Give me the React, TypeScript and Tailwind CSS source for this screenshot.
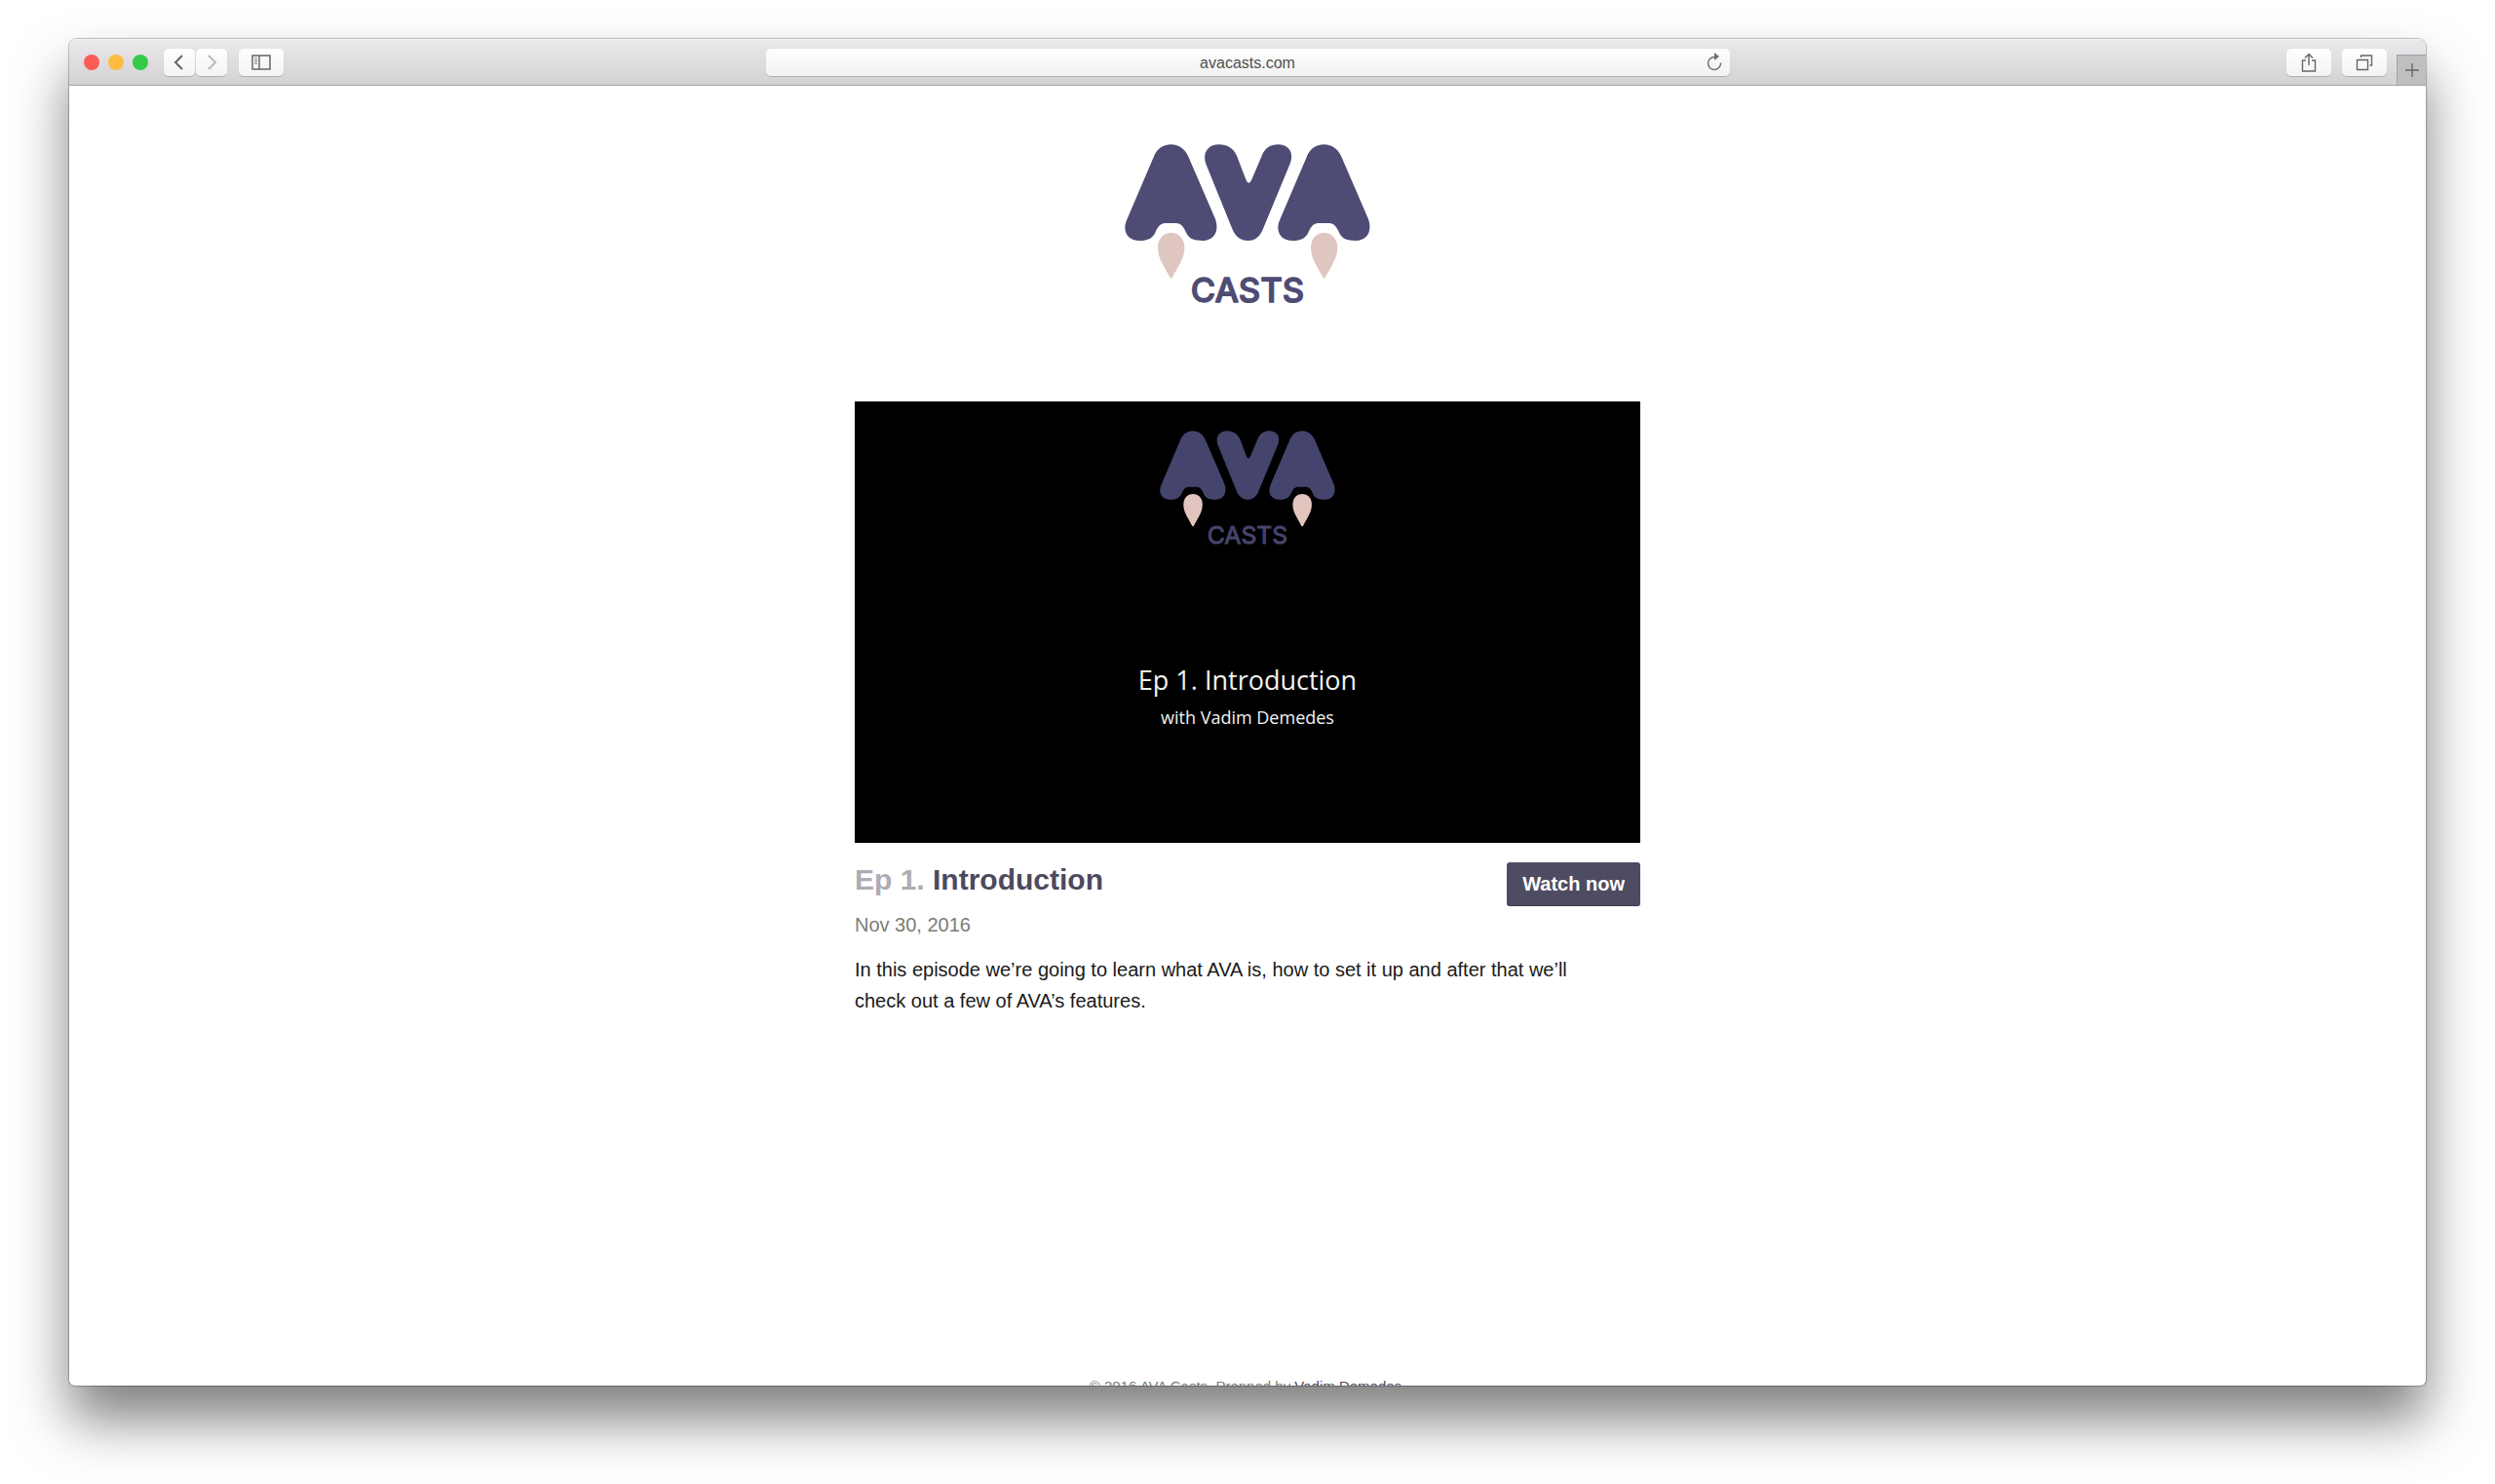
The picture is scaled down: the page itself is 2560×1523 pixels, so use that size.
import React from "react";

function Fang({ fill }: { fill: string }) {
  return (
    <path
      fill={fill}
      d="M215 327C240 327 256 346 256 372C256 405 240 422 221 460Q215 474 209 460C190 422 174 405 174 372C174 346 190 327 215 327Z"
    />
  );
}

function Peak() {
  return (
    <path d="M215 55C240 55 258 70 268 92L350 282C364 318 350 351 312 351C285 351 270 345 262 328C254 308 245 297 230 297L196 297C183 297 174 308 166 326C158 342 145 351 118 351C80 351 64 322 78 288L160 96C170 70 188 55 215 55Z" />
  );
}

function Logo({ className, body, fang, weight }: { className: string; body: string; fang: string; weight: number }) {
  return (
    <svg className={className} viewBox="72 54 756 520" role="img" aria-label="AVA Casts">
      <g fill={body}>
        <Peak />
        <path d="M362 55C390 55 408 68 418 92L446 165Q454 182 462 165L493 92C503 66 520 55 545 55C577 55 594 80 581 114L499 312C489 338 474 351 452 351C428 351 412 338 402 312L322 115C311 85 325 55 362 55Z" />
        <g transform="translate(471 0)">
          <Peak />
        </g>
      </g>
      <Fang fill={fang} />
      <g transform="translate(471 0)">
        <Fang fill={fang} />
      </g>
      <text
        x="450"
        y="541"
        textAnchor="middle"
        fontFamily="Inter, sans-serif"
        fontWeight={weight}
        fontSize="104"
        fill={body}
        stroke={body}
        strokeWidth="4"
        strokeLinejoin="round"
      >
        CASTS
      </text>
    </svg>
  );
}

const toolButton =
  "flex h-7 items-center justify-center rounded-[5px] bg-linear-to-b from-[#fefefe] to-[#f4f4f4] shadow-[0_1px_1px_rgba(0,0,0,0.18)]";

function Toolbar() {
  return (
    <header className="grid h-12 shrink-0 grid-cols-[1fr_989px_1fr] items-center border-b border-[#a5a2a7] bg-linear-to-b from-[#ebe9eb] to-[#d3d1d4] shadow-[inset_0_1px_0_#f6f5f6]">
      <div className="flex items-center pl-[15px]">
        <div className="flex gap-[9px]">
          <span className="size-4 rounded-full bg-[#fc5b57]" />
          <span className="size-4 rounded-full bg-[#fdbc40]" />
          <span className="size-4 rounded-full bg-[#33cb47]" />
        </div>
        <div className="ml-4 flex gap-px">
          <button aria-label="Back" className={`${toolButton} w-8`}>
            <svg className="size-5" viewBox="0 0 20 20" fill="none" stroke="#666" strokeWidth="2">
              <path d="M13 3 6 10l7 7" />
            </svg>
          </button>
          <button aria-label="Forward" className={`${toolButton} w-8`}>
            <svg className="size-5" viewBox="0 0 20 20" fill="none" stroke="#bbb" strokeWidth="2">
              <path d="m7 3 7 7-7 7" />
            </svg>
          </button>
        </div>
        <button aria-label="Show sidebar" className={`${toolButton} ml-3 w-[46px]`}>
          <svg className="h-4 w-5" viewBox="0 0 20 16" fill="none" stroke="#666">
            <rect x="1" y="1" width="18" height="14" strokeWidth="1.5" />
            <path d="M8 1v14" strokeWidth="1.5" />
            <path d="M3 4h3M3 6.500h3M3 9h3" />
          </svg>
        </button>
      </div>
      <div className="relative">
        <input
          aria-label="Address"
          defaultValue="avacasts.com"
          className="block h-7 w-full rounded-[5px] bg-linear-to-b from-[#fefefe] to-[#f2f2f2] pt-0.5 text-center text-base text-[#505050] shadow-[0_1px_1px_rgba(0,0,0,0.18)]"
        />
        <button aria-label="Reload" className="absolute top-1 right-1.5">
          <svg className="size-5" viewBox="0 0 20 20" fill="none" stroke="#707070" strokeWidth="1.500">
            <path d="M16.500 10.500A6.500 6.500 0 1 1 10 4.500h2" />
            <path d="m10 0 5 4-5 4z" fill="#707070" stroke="none" />
          </svg>
        </button>
      </div>
      <div className="flex h-full items-center justify-end">
        <button aria-label="Share" className={`${toolButton} w-[46px]`}>
          <svg className="size-5" viewBox="0 0 20 20" fill="none" stroke="#666" strokeWidth="1.400">
            <path d="M7 8H3.500v11h13V8H13M10 13V2M6 5.500l4-4 4 4" />
          </svg>
        </button>
        <button aria-label="Show all tabs" className={`${toolButton} ml-[11px] w-[46px]`}>
          <svg className="size-5" viewBox="0 0 20 20" fill="none" stroke="#666" strokeWidth="1.400">
            <path d="M2.500 7.500h11v10h-11zM6.500 5V3h11v10H15.500" />
          </svg>
        </button>
        <button
          aria-label="New tab"
          className="ml-[10px] flex h-[31px] w-[30px] items-center justify-center self-end border-t border-l border-[#a5a2a7] bg-[#c0bec1]"
        >
          <svg className="size-4" viewBox="0 0 16 16" stroke="#666" strokeWidth="1.400">
            <path d="M8 1v14M1 8h14" />
          </svg>
        </button>
      </div>
    </header>
  );
}

export default function App() {
  return (
    <div className="flex h-screen flex-col bg-white px-[71px] pt-10 pb-[101px] font-['Liberation_Sans',Arial,sans-serif]">
      <div className="flex min-h-0 flex-1 flex-col overflow-hidden rounded-t-lg rounded-b-md bg-white shadow-[0_0_1px_1px_rgba(0,0,0,0.25),0_35px_56px_rgba(0,0,0,0.5)]">
        <Toolbar />
        <div className="min-h-0 flex-1 overflow-hidden">
          <div className="flex min-h-[calc(100%+11px)] flex-col items-center">
            <Logo className="mt-[60px] w-[252px]" body="#4e4c74" fang="#dfc6c1" weight={500} />
            <main className="mt-[91px] w-full max-w-[806px]">
              <div className="flex aspect-[806/453] flex-col items-center bg-black pt-[30px] font-['Open_Sans',sans-serif] text-[#f2f2f2]">
                <Logo className="w-[180px]" body="#45446d" fang="#e2c5bf" weight={400} />
                <p className="mt-[114px] text-[27px] leading-9">Ep 1. Introduction</p>
                <p className="mt-1 text-lg leading-8">with Vadim Demedes</p>
              </div>
              <div className="mt-5 flex items-start justify-between">
                <div>
                  <h1 className="text-[30px] leading-9 font-bold text-[#4c4a5e]">
                    <span className="text-[#aeacb5]">Ep 1.</span> Introduction
                  </h1>
                  <p className="mt-3.5 text-xl leading-7 text-[#7b7d74]">Nov 30, 2016</p>
                </div>
                <button className="h-[45px] rounded-[3px] border-b border-[#3c3a4e] bg-[#4e4c62] px-4 text-xl font-bold text-white">
                  Watch now
                </button>
              </div>
              <p className="mt-4 pr-10 text-xl leading-8 text-[#1a1a1a]">
                In this episode we’re going to learn what AVA is, how to set it up and after that we’ll check out a few
                of AVA’s features.
              </p>
            </main>
            <footer className="mt-auto text-[15px] leading-5 text-[#7b7d74]">
              © 2016 AVA Casts. Prepped by{" "}
              <a href="#vadim" className="text-[#4c4a5e]">
                Vadim Demedes
              </a>
              .
            </footer>
          </div>
        </div>
      </div>
    </div>
  );
}
